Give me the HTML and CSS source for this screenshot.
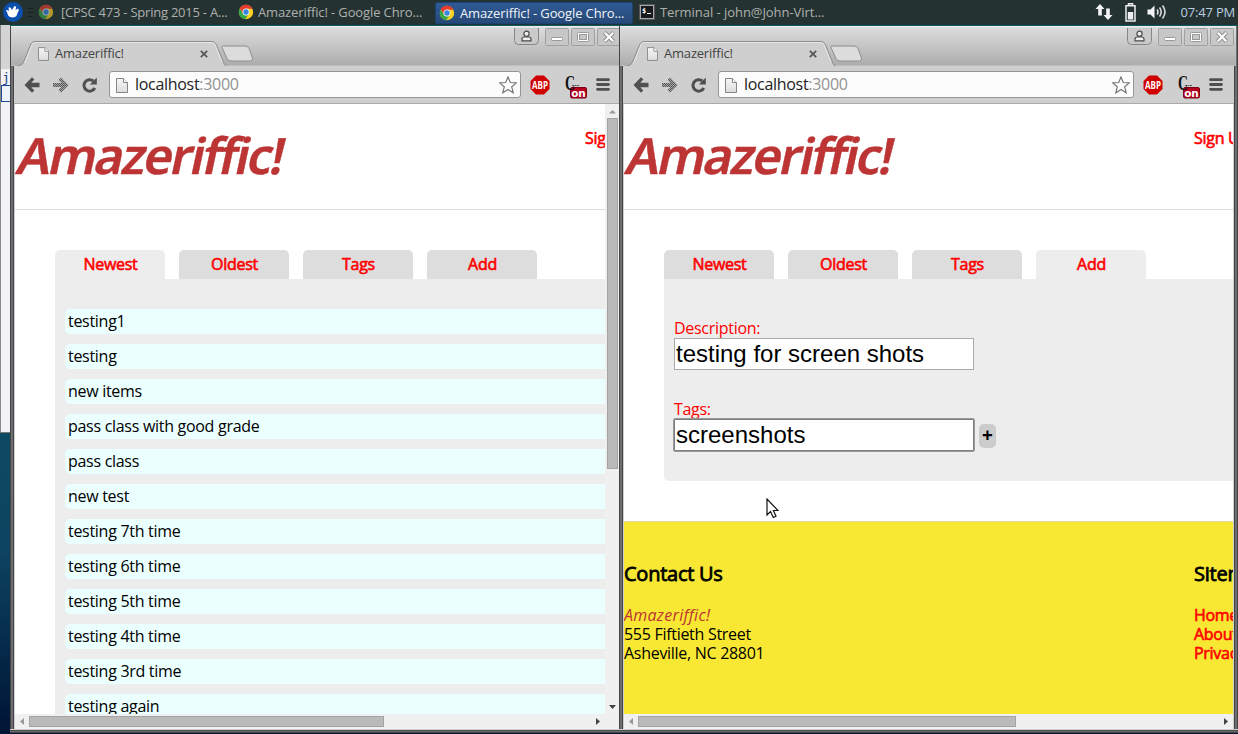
FILE: index.html
```
<!DOCTYPE html>
<html lang="en">
<head>
<meta charset="utf-8">
<title>Amazeriffic!</title>
<link rel="stylesheet" href="styles.css">
</head>
<body>
<svg class="defs" width="0" height="0">
  <defs>
    <linearGradient id="frame" x1="0" y1="0" x2="0" y2="1"><stop offset="0" stop-color="#f6f6f6"/><stop offset="1" stop-color="#dcdcdc"/></linearGradient>
    <pattern id="dither" width="2" height="2" patternUnits="userSpaceOnUse"><rect width="1" height="1" fill="#555"/><rect x="1" y="1" width="1" height="1" fill="#555"/></pattern>
  </defs>
  <symbol id="chrome" viewBox="0 0 16 16">
    <circle cx="8" cy="8" r="7.200" fill="#fbd21f"/>
    <path d="M1.700 4.400A7.200 7.200 0 0 1 14.400 4.800L8 4.800A3.300 3.300 0 0 0 5 9.200Z" fill="#e53a2d"/>
    <path d="M1.700 4.400A7.200 7.200 0 0 0 7.200 15.200L10.700 10.200A3.400 3.400 0 0 1 5 9.400Z" fill="#35a548"/>
    <circle cx="8" cy="8" r="3.500" fill="#f4f8fc"/><circle cx="8" cy="8" r="2.700" fill="#3a84dc"/>
  </symbol>
  <symbol id="page" viewBox="0 0 12 15">
    <path d="M.5 .5H7.500L11.500 4.500V14.500H.5Z" fill="url(#frame)" stroke="#858585"/><path d="M7.500 .5V4.500H11.500" fill="#fff" stroke="#858585"/>
  </symbol>
  <symbol id="tabshape" viewBox="0 0 244 27">
    <path d="M0 26.500C6 25 8 24 9.500 20L16 4C17 1.500 18 .8 21 .8H196C199 .8 200 1.500 201 4L207.500 20C209 24 210 25.500 214 26.500V27H0Z" fill="#cfcfcf"/>
    <path d="M0 25.500C6 24.500 7.500 23.500 9 20L15.500 4C16.500 1.500 18 .5 21 .5H196C199 .5 200.500 1.500 201.500 4L208 20C209.500 24 210 25 214 26" fill="none" stroke="#8d8d8d"/>
    <path d="M9.500 22L16.500 5C17.500 2.500 18.500 1.500 21 1.500H196C198.500 1.500 199.500 2.500 200.500 5L207 21" fill="none" stroke="#ececec" stroke-width=".8"/>
    <path d="M207 6.500Q206.500 5 208.500 5H230Q233 5 234 7.500L237.500 17Q238 20 235.500 20H216Q213 20 212 17.500Z" fill="#dcdcdc" stroke="#8e8e8e"/>
  </symbol>
  <symbol id="back" viewBox="0 0 16 16"><path d="M.5 8L8 .3L10.300 2.600L7.300 5.700H15.500V10.300H7.300L10.300 13.400L8 15.700Z" fill="#505050"/></symbol>
  <symbol id="forward" viewBox="0 0 16 16"><path d="M15.500 8L8 .5L5.500 3L8.500 6H0V10H8.500L5.500 13L8 15.500Z" fill="#777" opacity=".45"/><path d="M15.500 8L8 .5L5.500 3L8.500 6H0V10H8.500L5.500 13L8 15.500Z" fill="url(#dither)"/></symbol>
  <symbol id="reload" viewBox="0 0 16 16"><path d="M12.800 11A5.700 5.700 0 1 1 11.300 4" fill="none" stroke="#505050" stroke-width="3"/><path d="M14.800 .5V7.500H7.800Z" fill="#505050"/></symbol>
  <symbol id="star" viewBox="0 0 18 18"><path d="M9 .9L11.300 6.500L17.300 6.900L12.700 10.800L14.200 16.800L9 13.500L3.800 16.800L5.300 10.800L.7 6.900L6.700 6.500Z" fill="#fff" stroke="#777" stroke-width="1.200"/></symbol>
  <symbol id="user" viewBox="0 0 25 17"><path d="M.5 0V12.500Q.5 16.500 4.500 16.500H20.500Q24.500 16.500 24.500 12.500V0" fill="#cacaca" stroke="#858585"/><circle cx="12.500" cy="5.700" r="2.600" fill="#eee" stroke="#4b4b4b" stroke-width="1.200"/><path d="M8 12.800V11Q8 9 10.500 9H14.500Q17 9 17 11V12.800Z" fill="#eee" stroke="#4b4b4b" stroke-width="1.200"/></symbol>
  <symbol id="minimize" viewBox="0 0 24 18"><rect x=".5" y=".5" width="23" height="17" rx="1" fill="#c7c7c7" stroke="#a0a0a0"/><rect x="6.500" y="9.500" width="11" height="3" rx="1" fill="#fff" stroke="#999"/></symbol>
  <symbol id="maximize" viewBox="0 0 24 18"><rect x=".5" y=".5" width="23" height="17" rx="1" fill="#c7c7c7" stroke="#a0a0a0"/><rect x="6.500" y="4.500" width="11" height="9" rx="1" fill="#fff" stroke="#999"/><rect x="8.500" y="6.500" width="7" height="5" fill="#c7c7c7" stroke="#999"/></symbol>
  <symbol id="close" viewBox="0 0 24 18"><rect x=".5" y=".5" width="23" height="17" rx="1" fill="#c7c7c7" stroke="#a0a0a0"/><path d="M7.500 4.500L16.500 13.500M16.500 4.500L7.500 13.500" stroke="#8d8d8d" stroke-width="4"/><path d="M7.800 4.800L16.200 13.200M16.200 4.800L7.800 13.200" stroke="#fff" stroke-width="2.200"/></symbol>
  <symbol id="cross" viewBox="0 0 8 8"><path d="M.8 .8L7.200 7.200M7.200 .8L.8 7.200" stroke="#555" stroke-width="1.700"/></symbol>
  <symbol id="menu" viewBox="0 0 14 13"><path d="M1.500 1.700H12.500M1.500 6.500H12.500M1.500 11.300H12.500" stroke="#505050" stroke-width="2.800" stroke-linecap="round"/></symbol>
  <symbol id="abp" viewBox="0 0 20 20"><path d="M6 .5H14L19.500 6V14L14 19.500H6L.5 14V6Z" fill="#d00000"/></symbol>
  <symbol id="cext" viewBox="0 0 24 24"><path d="M9 10.500H16" stroke="#555" stroke-dasharray="2 .5"/><rect x="7.500" y="12.500" width="16" height="10.500" rx="1.500" fill="#b50020" stroke="#7d0015"/></symbol>
</svg>

<header class="panel">
  <svg class="start" viewBox="0 0 20 20"><circle cx="10" cy="10" r="10" fill="#0b4fad"/><path d="M3 8Q5 8 6 9L5.500 5.500L7.500 5.500L9 8L11.500 4L13.200 4.700L12.500 8L15 6.500L16 8L14.500 11Q14 15 10 15.500Q5 15.500 4.500 11.500Z" fill="#fff"/></svg>
  <svg class="grip" viewBox="0 0 5 9"><path d="M0 .5H5M0 4.500H5M0 8.500H5" stroke="#151d1d"/></svg>
  <div class="task dim"><svg><use href="#chrome"/></svg><span class="t1">[CPSC 473 - Spring 2015 - A...</span></div>
  <div class="task"><svg><use href="#chrome"/></svg><span class="t2">Amazeriffic! - Google Chro...</span></div>
  <div class="task current"><svg><use href="#chrome"/></svg><span>Amazeriffic! - Google Chro...</span></div>
  <div class="task terminal"><svg viewBox="0 0 16 16"><rect x=".5" y=".5" width="15" height="15" fill="#aaa" stroke="#555"/><rect x="2" y="2" width="12" height="12" fill="#171a1c"/><text x="3" y="9" class="prompt">$</text><path d="M8 9.500H12" stroke="#fff"/></svg><span>Terminal - john@John-Virt...</span></div>
  <div class="tray">
    <svg class="net" viewBox="0 0 18 16"><path d="M5 0L9.500 5H6.800V11.500H3.200V5H.5ZM13 16L8.500 11H11.200V4.500H14.800V11H17.500Z" fill="#f4f4f4"/></svg>
    <svg class="battery" viewBox="0 0 11 19"><path d="M3.500 2.500V.8H7.500V2.500M1 2.800H10V18H1Z" fill="none" stroke="#eee" stroke-width="1.500"/><rect x="2.800" y="9" width="5.400" height="7.500" fill="#eee"/></svg>
    <svg class="sound" viewBox="0 0 20 16"><path d="M.5 5.500H3.500L7.500 1.500V14.500L3.500 10.500H.5Z" fill="#f4f4f4"/><path d="M10 5.500Q12 8 10 10.500M12.500 3.500Q16 8 12.500 12.500M15.500 1.500Q20.500 8 15.500 14.500" fill="none" stroke="#ddd" stroke-width="1.600"/></svg>
    <span class="clock">07:47 PM</span>
  </div>
</header>

<main class="desktop">
  <div class="behind"><div class="behind-text">j</div><div class="behind-box"></div></div>

  <section class="window first">
    <div class="titlebar">
      <div class="tabstrip"><svg class="tab-bg"><use href="#tabshape"/></svg><div class="tab-label"><svg class="doc"><use href="#page"/></svg><span>Amazeriffic!</span><svg class="x"><use href="#cross"/></svg></div></div>
      <div class="controls"><svg class="user"><use href="#user"/></svg><svg><use href="#minimize"/></svg><svg><use href="#maximize"/></svg><svg><use href="#close"/></svg></div>
    </div>
    <div class="toolbar"><svg><use href="#back"/></svg><svg><use href="#forward"/></svg><svg><use href="#reload"/></svg>
      <div class="omnibox"><svg class="doc"><use href="#page"/></svg><span>localhost<i>:3000</i></span><svg class="star"><use href="#star"/></svg></div>
      <svg class="abp" viewBox="0 0 20 20"><use href="#abp"/><text x="2" y="14" class="abp-label" textLength="16" lengthAdjust="spacingAndGlyphs">ABP</text></svg><svg class="cext" viewBox="0 0 24 24"><use href="#cext"/><text x="2" y="14.500" class="ext-c" textLength="10" lengthAdjust="spacingAndGlyphs">C</text><text x="15.500" y="21.500" text-anchor="middle" class="ext-on">on</text></svg><svg class="menu"><use href="#menu"/></svg></div>
    <div class="view">
      <div class="page">
        <div class="masthead"><h1>Amazeriffic!</h1><a class="signup">Sign Up</a></div>
        <div class="body">
          <nav class="tabs"><a class="active">Newest</a><a>Oldest</a><a>Tags</a><a>Add</a></nav>
          <ul class="content">
            <li>testing1</li><li>testing</li><li>new items</li><li>pass class with good grade</li><li>pass class</li><li>new test</li><li>testing 7th time</li><li>testing 6th time</li><li>testing 5th time</li><li>testing 4th time</li><li>testing 3rd time</li><li>testing again</li>
          </ul>
        </div>
      </div>
      <div class="vscroll"><svg viewBox="0 0 15 14"><path d="M4 9.500L7.500 6L11 9.500Z" fill="#999"/></svg><div class="thumb"></div><svg class="last" viewBox="0 0 15 14"><path d="M4 5L7.500 9L11 5Z" fill="#444"/></svg></div>
    </div>
    <div class="hscroll"><svg viewBox="0 0 14 15"><path d="M9 4V11L5 7.500Z" fill="#999"/></svg><div class="thumb"></div><svg class="last" viewBox="0 0 14 15"><path d="M5 4V11L9 7.500Z" fill="#444"/></svg></div>
  </section>

  <section class="window second">
    <div class="titlebar">
      <div class="tabstrip"><svg class="tab-bg"><use href="#tabshape"/></svg><div class="tab-label"><svg class="doc"><use href="#page"/></svg><span>Amazeriffic!</span><svg class="x"><use href="#cross"/></svg></div></div>
      <div class="controls"><svg class="user"><use href="#user"/></svg><svg><use href="#minimize"/></svg><svg><use href="#maximize"/></svg><svg><use href="#close"/></svg></div>
    </div>
    <div class="toolbar"><svg><use href="#back"/></svg><svg><use href="#forward"/></svg><svg><use href="#reload"/></svg>
      <div class="omnibox"><svg class="doc"><use href="#page"/></svg><span>localhost<i>:3000</i></span><svg class="star"><use href="#star"/></svg></div>
      <svg class="abp" viewBox="0 0 20 20"><use href="#abp"/><text x="2" y="14" class="abp-label" textLength="16" lengthAdjust="spacingAndGlyphs">ABP</text></svg><svg class="cext" viewBox="0 0 24 24"><use href="#cext"/><text x="2" y="14.500" class="ext-c" textLength="10" lengthAdjust="spacingAndGlyphs">C</text><text x="15.500" y="21.500" text-anchor="middle" class="ext-on">on</text></svg><svg class="menu"><use href="#menu"/></svg></div>
    <div class="view">
      <div class="page">
        <div class="masthead"><h1>Amazeriffic!</h1><a class="signup">Sign Up</a></div>
        <div class="body">
          <nav class="tabs"><a>Newest</a><a>Oldest</a><a>Tags</a><a class="active">Add</a></nav>
          <form class="content form">
            <label>Description:</label>
            <div class="field">testing for screen shots</div>
            <label class="tags-label">Tags:</label>
            <div class="row"><div class="field focus">screenshots</div><span class="add">+</span></div>
          </form>
        </div>
        <footer class="footer">
          <div class="contact"><h4>Contact Us</h4><p><em>Amazeriffic!</em><br>555 Fiftieth Street<br>Asheville, NC 28801</p></div>
          <div class="sitemap"><h4>Sitemap</h4><p><a>Home</a><br><a>About</a><br><a>Privacy</a></p></div>
        </footer>
      </div>
    </div>
    <div class="hscroll"><svg viewBox="0 0 14 15"><path d="M9 4V11L5 7.500Z" fill="#999"/></svg><div class="thumb"></div><svg class="last" viewBox="0 0 14 15"><path d="M5 4V11L9 7.500Z" fill="#444"/></svg></div>
  </section>
  <svg class="cursor" viewBox="0 0 13 21"><path d="M1 1V17L4.500 13.500L7.300 19.500L10 18.200L7.400 12.500H12Z" fill="#fff" stroke="#111" stroke-width="1.200"/></svg>
</main>
</body>
</html>
```
FILE: styles.css
```
* { box-sizing: border-box; }
body { margin: 0; width: 1238px; height: 734px; overflow: hidden; display: flex; flex-direction: column; font-family: "Open Sans", "Noto Sans", sans-serif; font-size: 16px; letter-spacing: -.29px; color: #000; background: #00204a; }
svg { display: block; flex: none; }
.defs { position: absolute; }
h1, h4, p, ul { margin: 0; padding: 0; }

.panel { height: 25px; flex: none; background: #253232; display: flex; align-items: center; color: #aeb0ad; font-size: 13px; letter-spacing: -.12px; white-space: nowrap; padding-bottom: 1px; }
.start { width: 20px; height: 20px; margin-left: 3px; }
.grip { width: 5px; height: 9px; margin: 0 9px 0 5px; }
.task { width: 197px; height: 22px; display: flex; align-items: center; gap: 7px; margin-right: 3px; padding-bottom: 1px; }
.task svg { width: 16px; height: 16px; margin-left: -4px; }
.t1 { letter-spacing: -.23px; }
.t2 { margin-left: -3px; }
.dim svg { opacity: .65; }
.current { background: linear-gradient(#305a96, #274978); border: 1px solid #1b4270; border-radius: 2px; color: #f2f4f6; width: 198px; margin-left: -7px; padding-bottom: 0; margin-top: 1px; }
.task.current svg { margin-left: 3px; }
.current span { margin-left: -2px; }
.task.terminal svg { margin-left: 3px; }
.terminal span { margin-left: -2px; letter-spacing: -.05px; }
.prompt { font: bold 7px "DejaVu Sans Mono", monospace; fill: #fff; }
.tray { margin-left: auto; display: flex; align-items: center; padding-right: 3px; color: #b9cfe0; }
.net { width: 18px; height: 16px; margin-right: 12px; }
.battery { width: 11px; height: 19px; margin-right: 11px; }
.sound { width: 20px; height: 16px; margin-right: 14px; }
.clock { letter-spacing: -.2px; }

.desktop { position: relative; height: 709px; background: linear-gradient(#0e5a61 0, #0d4461 74%, #001738 98%); }
.behind { width: 10px; height: 408px; background: linear-gradient(#d4d4d4 0 44px, #f2f2f7 44px); border-left: 1px solid #888; border-bottom: 1px solid #777; padding-top: 45px; overflow: hidden; font: 13px/15px "DejaVu Sans Mono", monospace; color: #173a80; }
.behind-text { margin-left: 1px; }
.behind-box { width: 9px; height: 17px; border: 1px solid #1d4c96; border-right: 0; background: #eef3fb; }

.window { position: absolute; top: 1px; height: 707px; padding: 0 4px 4px 5px; display: flex; flex-direction: column; overflow: hidden;
  background: linear-gradient(#cfcfcf 1px, #4c4b4d 1px 2px, #6b6a6c 2px 3px, #454446 3px) bottom / 100% 4px no-repeat,
    linear-gradient(90deg, #444 1px, #6e6e70 1px 3px, #444446 3px 4px, #cfcfcf 4px calc(100% - 4px), #444446 calc(100% - 4px) calc(100% - 3px), #6e6e70 calc(100% - 3px) calc(100% - 1px), #444 calc(100% - 1px)); }
.first { left: 10px; width: 614px; }
.second { left: 619px; width: 619px; padding-right: 5px; }
.titlebar { height: 40px; flex: none; margin: 0 -3px 0 -4px; padding-left: 4px; background: linear-gradient(#f0f0f0 0, #dcdcdc 2px, #adadad); border-bottom: 1px solid #bdbdbd; display: flex; justify-content: space-between; align-items: flex-start; }
.tabstrip { margin-top: 15px; display: grid; width: 244px; height: 27px; }
.tabstrip > * { grid-area: 1 / 1; }
.tab-bg { width: 244px; height: 27px; }
.tab-label { display: flex; align-items: center; padding-left: 23px; font-size: 13px; letter-spacing: -.2px; color: #444; height: 24px; }
.tab-label .doc { width: 11px; height: 14px; margin-right: 6px; margin-top: 2px; }
.tab-label span { width: 145px; }
.tab-label .x { width: 8px; height: 8px; margin-top: 2px; }
.controls { display: flex; gap: 2px; margin: 2px 2px 0 0; }
.controls svg { width: 24px; height: 18px; }
.controls .user { width: 25px; height: 17px; margin-right: 4px; }

.toolbar { height: 38px; flex: none; margin: 0 -1px; padding: 0 11px 0 10px; background: #cfcfcf; border-bottom: 1px solid #aaa; display: flex; align-items: center; }
.toolbar > svg { width: 16px; height: 16px; margin-right: 13px; }
.omnibox { flex: 1; height: 27px; background: #fcfcfc; border: 1px solid #959595; border-radius: 3px; display: flex; align-items: center; margin: 0 9px 0 -2px; padding: 0 3px 2px 6px; color: #222; letter-spacing: -.3px; }
.omnibox i { font-style: normal; color: #929292; }
.omnibox .doc { width: 12px; height: 15px; margin: 3px 7px 0 0; }
.omnibox .star { width: 18px; height: 18px; margin: 3px 0 0 auto; }
.toolbar .abp { width: 20px; height: 20px; margin-right: 13px; }
.toolbar .cext { width: 24px; height: 24px; margin: 4px 9px 0 0; }
.toolbar .menu { width: 14px; height: 13px; margin-right: 0; }
.abp-label { font: bold 11px "Open Sans", sans-serif; fill: #fff; letter-spacing: 0; }
.ext-c { font: bold 20px "Liberation Serif", serif; fill: #111; letter-spacing: 0; }
.ext-on { font: bold 10.500px "DejaVu Sans", sans-serif; fill: #fff; letter-spacing: 0; }

.view { height: 610px; flex: none; display: flex; overflow: hidden; background: #fff; }
.page { flex: 1; min-width: 0; overflow: hidden; }
.masthead { width: 970px; height: 106px; border-bottom: 1px solid #ddd; display: flex; }
h1 { width: 570px; font: 600 50px/60px "Noto Sans", "Open Sans", sans-serif; letter-spacing: -2.150px; color: #bc3434; -webkit-text-stroke: .4px #bc3434; transform: skewX(-12deg); transform-origin: 0 48px; margin-top: 21px; height: 60px; }
.signup, .tabs a, .sitemap a { color: #f00; -webkit-text-stroke: .6px #f00; }
.signup { margin-top: 23px; line-height: 22px; white-space: nowrap; }
.body { width: 970px; padding: 40px; }
.tabs { display: flex; gap: 14px; }
.tabs a { width: 110px; height: 29px; line-height: 28px; text-align: center; background: #ddd; border-radius: 5px 5px 0 0; padding-left: 1px; }
.tabs .active { background: #ededed; }
.content { background: #ededed; padding: 30px 10px; border-radius: 0 5px 5px 5px; list-style: none; display: flex; flex-direction: column; gap: 10px; }
.content li { height: 25px; line-height: 24px; padding-left: 3px; background: #ebffff; border-radius: 5px; }
.form { height: 202px; gap: 0; padding-top: 39px; }
.form label { color: #f00; line-height: 20px; height: 20px; }
.form .tags-label { margin-top: 29px; }
.field { width: 300px; height: 32px; border: 1px solid #a9a9a9; background: #fff; font: 24px/30px "Liberation Sans", Arial, sans-serif; letter-spacing: 0; padding-left: 1px; }
.field.focus { border-color: #7d7d7d; outline: 1px solid #999; border-radius: 1px; }
.row { display: flex; align-items: center; gap: 5px; }
.add { width: 17px; height: 24px; border-radius: 5px; background: #ccc; text-align: center; font-size: 19px; line-height: 22px; font-weight: bold; letter-spacing: 0; margin-top: 2px; }
.footer { width: 970px; height: 300px; background: #f9e833; border-top: 1px solid #e0dca0; display: flex; padding-top: 39px; line-height: 19px; }
.contact { width: 570px; }
.contact em { color: #bc3434; letter-spacing: .3px; }
.footer h4 { font-size: 20px; font-weight: 400; line-height: 26px; -webkit-text-stroke: .8px #000; margin-bottom: 19px; letter-spacing: -.25px; }

.vscroll { width: 15px; background: #f0f0f0; display: flex; flex-direction: column; align-items: center; }
.vscroll svg { width: 15px; height: 14px; }
.vscroll .thumb { width: 11px; height: 351px; background: #bababa; border: 1px solid #a3a3a3; }
.hscroll { height: 15px; flex: none; background: #f0f0f0; display: flex; align-items: center; }
.hscroll svg { width: 14px; height: 15px; }
.hscroll .thumb { width: 355px; height: 11px; background: #bababa; border: 1px solid #a3a3a3; }
.second .hscroll .thumb { width: 378px; }
.last { margin-top: auto; }
.hscroll .last { margin: 0 0 0 auto; }
.first .hscroll .last { margin-right: 15px; }
.cursor { position: absolute; left: 766px; top: 473px; width: 13px; height: 21px; }
```
